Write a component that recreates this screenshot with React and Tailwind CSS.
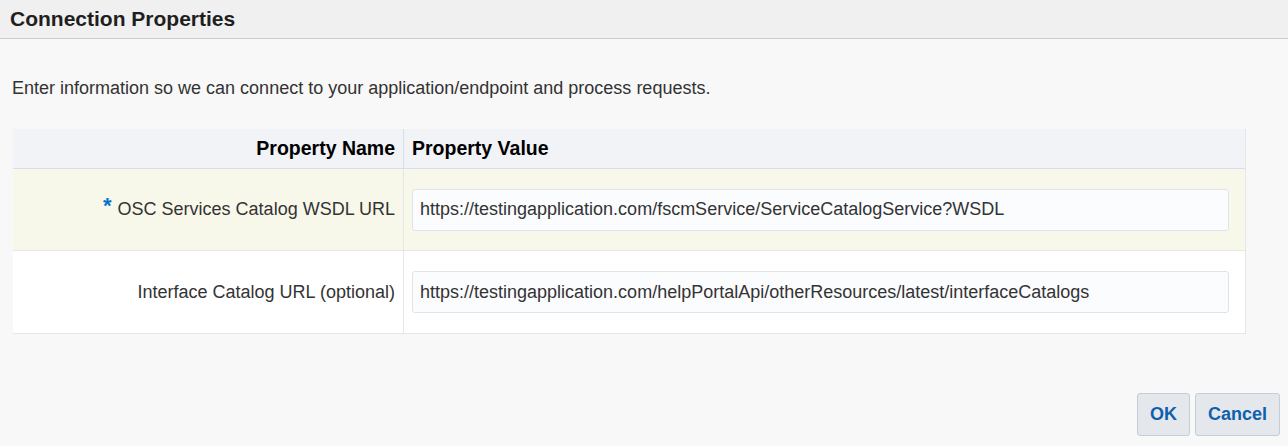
export default function App() {
  const rows = [
    {
      label: 'OSC Services Catalog WSDL URL',
      required: true,
      value: 'https://testingapplication.com/fscmService/ServiceCatalogService?WSDL',
      bg: 'bg-[#f8f8ea]',
    },
    {
      label: 'Interface Catalog URL (optional)',
      required: false,
      value: 'https://testingapplication.com/helpPortalApi/otherResources/latest/interfaceCatalogs',
      bg: 'bg-white',
    },
  ];

  return (
    <div className="w-[1288px] h-[446px] bg-[#f8f8f8] flex flex-col font-['Liberation_Sans',Arial,sans-serif] text-[#333]">
      <div className="h-[39px] shrink-0 bg-[#f0f0f0] border-b border-[#c4ced7] flex items-center px-[10px]">
        <h1 className="text-[21px] font-bold text-[#1f1f1f]">Connection Properties</h1>
      </div>

      <p className="mt-[38px] ml-[12px] text-[18px] text-[#333] leading-[22px]">
        Enter information so we can connect to your application/endpoint and process requests.
      </p>

      <div className="mt-[30px] ml-[13px] w-[1233px] border-r border-b border-[#e6e6e6]">
        <div className="grid grid-cols-[391px_1fr] bg-[#f1f3f7] border-b border-[#d6dfe6] h-[40px]">
          <div className="flex items-center justify-end pr-[8px] border-r border-[#d6dfe6] text-[19.5px] font-bold text-black">
            Property Name
          </div>
          <div className="flex items-center pl-[8px] text-[19.5px] font-bold text-black">Property Value</div>
        </div>
        {rows.map((row, i) => (
          <div
            key={row.label}
            className={`grid grid-cols-[391px_1fr] h-[82px] ${row.bg} ${i === 0 ? 'border-b border-[#e6e6e6]' : ''}`}
          >
            <div className="flex items-center justify-end pr-[8px] border-r border-[#e6e6e6] text-[18px] text-[#333]">
              {row.required && <span className="text-[#0572ce] font-bold text-[22px] mr-[6px] -mt-[8px]">*</span>}
              {row.label}
            </div>
            <div className="flex items-center pl-[8px] pr-[16px]">
              <div className="w-full h-[42px] bg-[#fbfcfe] border border-[#dfe4ea] rounded-[3px] flex items-center px-[7px] text-[18px] text-[#333]">
                {row.value}
              </div>
            </div>
          </div>
        ))}
      </div>

      <div className="flex justify-end gap-[5px] mt-[59px] pr-[8px]">
        <button className="w-[53px] h-[43px] bg-[#e4e8ec] border border-[#c4ced7] rounded-[3px] text-[18px] font-bold text-[#0f5fad]">
          OK
        </button>
        <button className="w-[85px] h-[43px] bg-[#e4e8ec] border border-[#c4ced7] rounded-[3px] text-[18px] font-bold text-[#0f5fad]">
          Cancel
        </button>
      </div>
    </div>
  );
}
